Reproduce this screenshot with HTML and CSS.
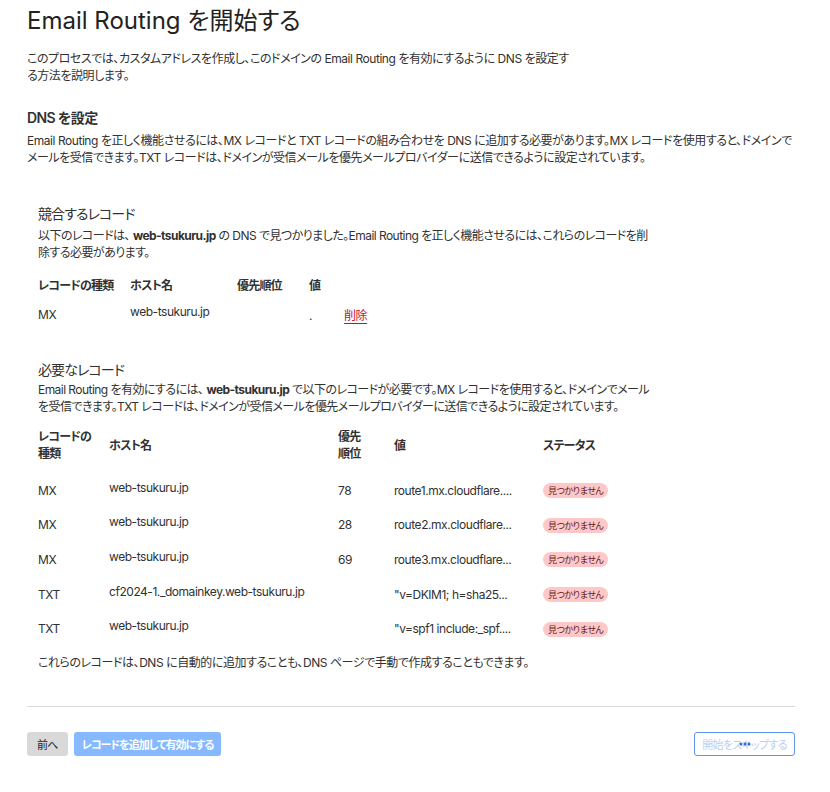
FILE: index.html
```html
<!DOCTYPE html>
<html lang="ja">

<head>
    <meta charset="UTF-8">
    <meta name="viewport" content="width=device-width, initial-scale=1.0">
    <title>Email Routing を開始する</title>
    <link rel="stylesheet" href="styles.css">
</head>

<body>
    <div class="page">
        <h1>Email Routing を開始する</h1>
        <p class="intro">このプロセスでは、カスタムアドレスを作成し、このドメインの Email Routing を有効にするように DNS を設定する方法を説明します。</p>

        <h2>DNS を設定</h2>
        <p class="lead">Email Routing を正しく機能させるには、MX レコードと TXT レコードの組み合わせを DNS に追加する必要があります。MX レコードを使用すると、ドメインでメールを受信できます。TXT レコードは、ドメインが受信メールを優先メールプロバイダーに送信できるように設定されています。</p>

        <div class="records">
            <h3>競合するレコード</h3>
            <p class="desc">以下のレコードは、<b>web-tsukuru.jp</b> の DNS で見つかりました。Email Routing を正しく機能させるには、これらのレコードを削除する必要があります。</p>
            <table class="rec-table conflict">
                <thead>
                    <tr>
                        <th class="c-type">レコードの種類</th>
                        <th class="c-host">ホスト名</th>
                        <th class="c-prio">優先順位</th>
                        <th>値</th>
                    </tr>
                </thead>
                <tbody>
                    <tr>
                        <td>MX</td>
                        <td><span class="host">web-tsukuru.jp</span></td>
                        <td></td>
                        <td><span class="dot">.</span><a href="#" class="delete">削除</a></td>
                    </tr>
                </tbody>
            </table>

            <h3 class="second">必要なレコード</h3>
            <p class="desc">Email Routing を有効にするには、<b>web-tsukuru.jp</b> で以下のレコードが必要です。MX レコードを使用すると、ドメインでメールを受信できます。TXT レコードは、ドメインが受信メールを優先メールプロバイダーに送信できるように設定されています。</p>
            <table class="rec-table required">
                <thead>
                    <tr>
                        <th class="r-type">レコードの<br>種類</th>
                        <th class="r-host">ホスト名</th>
                        <th class="r-prio">優先<br>順位</th>
                        <th class="r-val">値</th>
                        <th>ステータス</th>
                    </tr>
                </thead>
                <tbody>
                    <tr>
                        <td>MX</td>
                        <td><span class="host">web-tsukuru.jp</span></td>
                        <td>78</td>
                        <td>route1.mx.cloudflare....</td>
                        <td><span class="badge">見つかりません</span></td>
                    </tr>
                    <tr>
                        <td>MX</td>
                        <td><span class="host">web-tsukuru.jp</span></td>
                        <td>28</td>
                        <td>route2.mx.cloudflare...</td>
                        <td><span class="badge">見つかりません</span></td>
                    </tr>
                    <tr>
                        <td>MX</td>
                        <td><span class="host">web-tsukuru.jp</span></td>
                        <td>69</td>
                        <td>route3.mx.cloudflare...</td>
                        <td><span class="badge">見つかりません</span></td>
                    </tr>
                    <tr>
                        <td>TXT</td>
                        <td><span class="host">cf2024-1._domainkey.web-tsukuru.jp</span></td>
                        <td></td>
                        <td>"v=DKIM1; h=sha25...</td>
                        <td><span class="badge">見つかりません</span></td>
                    </tr>
                    <tr>
                        <td>TXT</td>
                        <td><span class="host">web-tsukuru.jp</span></td>
                        <td></td>
                        <td>"v=spf1 include:_spf....</td>
                        <td><span class="badge">見つかりません</span></td>
                    </tr>
                </tbody>
            </table>
            <p class="note">これらのレコードは、DNS に自動的に追加することも、DNS ページで手動で作成することもできます。</p>
        </div>

        <div class="footer">
            <div class="footer-left">
                <button type="button" class="btn btn-back">前へ</button>
                <button type="button" class="btn btn-primary" disabled>レコードを追加して有効にする</button>
            </div>
            <button type="button" class="btn btn-skip" disabled>開始をスキップする<span class="loading"><i></i><i></i><i></i></span></button>
        </div>
    </div>
</body>

</html>
```

FILE: styles.css
```css
:root {
    --text-color: #313131;
    --border-color: #d9d9d9;
}

body {
    font-family: Inter, "Noto Sans CJK JP", sans-serif;
    font-feature-settings: "palt";
    letter-spacing: -0.45px;
    margin: 0;
    background-color: #fff;
    color: var(--text-color);
}

.page {
    padding: 6px 35px 0 27px;
}

h1 {
    font-size: 24px;
    font-weight: 400;
    line-height: 30px;
    letter-spacing: 0;
    margin: 0 0 14px;
    color: #222;
}

p {
    font-size: 12px;
    line-height: 17px;
    margin: 0;
}

.intro {
    max-width: 545px;
}

h2 {
    font-size: 14px;
    font-weight: 600;
    line-height: 20px;
    letter-spacing: -0.6px;
    margin: 24px 0 5px;
}

.lead {
    line-height: 16.5px;
}

.records {
    padding: 38px 11px 0;
}

h3 {
    font-size: 14px;
    font-weight: 400;
    line-height: 20px;
    letter-spacing: -0.9px;
    margin: 0 0 3px;
}

h3.second {
    margin-top: 27px;
    margin-bottom: 1px;
}

.desc {
    max-width: 620px;
    letter-spacing: -0.55px;
}

.desc b {
    font-weight: 700;
    margin-left: 3px;
}

.rec-table {
    border-collapse: collapse;
    font-size: 12px;
    margin-top: 14px;
    table-layout: fixed;
}

.rec-table th {
    font-weight: 600;
    text-align: left;
    padding: 0;
    line-height: 17px;
    letter-spacing: -0.8px;
    vertical-align: middle;
}

.rec-table td {
    padding: 0;
    vertical-align: middle;
}

.conflict th {
    height: 20px;
}

.conflict td {
    height: 38px;
}

.c-type {
    width: 92px;
}

.c-host {
    width: 107px;
}

.c-prio {
    width: 72px;
}

.host {
    position: relative;
    top: -3px;
}

.dot {
    display: inline-block;
    width: 35px;
}

.delete {
    color: #c3112b;
    text-decoration: underline;
    text-underline-offset: 3px;
}

.required {
    margin-top: 11px;
}

.required th {
    height: 38px;
}

.required td {
    height: 34.6px;
}

.required tbody tr:first-child td {
    padding-top: 9px;
}

.r-type {
    width: 71px;
}

.r-host {
    width: 229px;
}

.r-prio {
    width: 56px;
}

.r-val {
    width: 149px;
}

.badge {
    display: inline-block;
    background-color: #ffc8c8;
    color: #5e1a1a;
    font-size: 9px;
    line-height: 15px;
    letter-spacing: -0.5px;
    padding: 0 5px;
    border-radius: 8px;
}

.note {
    margin-top: 8px;
}

.footer {
    border-top: 1px solid var(--border-color);
    margin-top: 35px;
    padding-top: 25px;
    display: flex;
    justify-content: space-between;
    align-items: center;
}

.footer-left {
    display: flex;
    gap: 6px;
}

.btn {
    font-family: inherit;
    font-feature-settings: "palt";
    font-size: 11px;
    letter-spacing: -0.7px;
    height: 24px;
    padding: 0 10px;
    border-radius: 3px;
    border: none;
}

.btn-back {
    background-color: #d9d9d9;
    color: #222;
    padding: 0 10px;
}

.btn-primary {
    background-color: #86b9ff;
    color: #fff;
    font-weight: 600;
    letter-spacing: -1px;
    padding: 0 8px;
}

.btn-skip {
    position: relative;
    background-color: #fff;
    border: 1px solid #5c95ec;
    color: #bccff0;
    width: 101px;
    padding: 0;
}

.loading {
    position: absolute;
    left: 50%;
    top: 50%;
    transform: translate(-50%, -50%);
    display: flex;
    gap: 1px;
}

.loading i {
    width: 3px;
    height: 3px;
    border-radius: 50%;
    background-color: #2f6fd6;
}
```
